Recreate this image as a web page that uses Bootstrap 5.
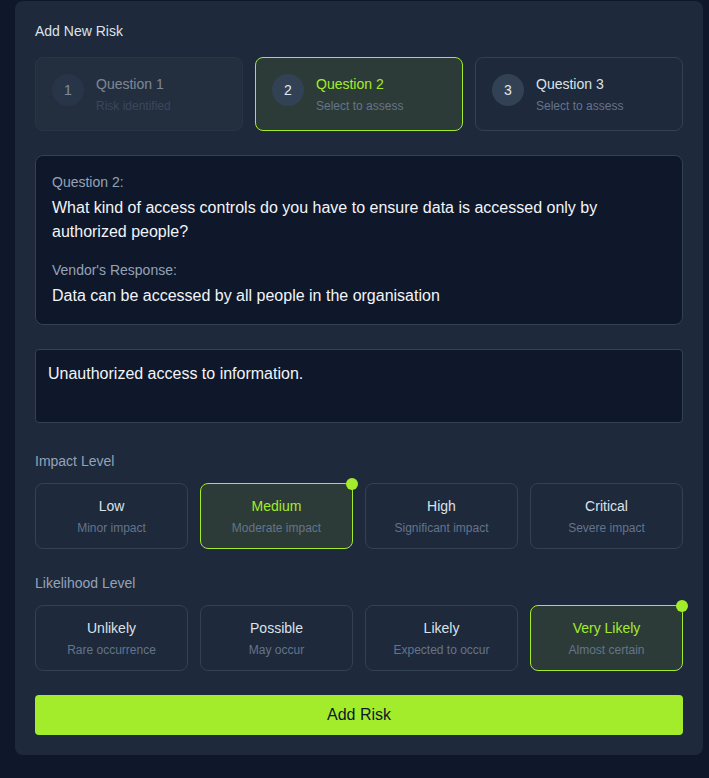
<!DOCTYPE html>
<html lang="en">
<head>
<meta charset="utf-8">
<meta name="viewport" content="width=device-width, initial-scale=1">
<title>Add New Risk</title>
<link href="https://cdn.jsdelivr.net/npm/bootstrap@5.3.0/dist/css/bootstrap.min.css" rel="stylesheet">
<style>
  :root { --lime: #a3ec2b; --panel: #1e293b; --ink: #0f172a; --line: #334155; }
  body { background: var(--ink); color: #f1f5f9; font-family: "Liberation Sans", Arial, sans-serif; font-size: 16px; line-height: 24px; }
  .page { padding: 1px 6px 23px 15px; }
  .risk-panel { background: var(--panel); border-radius: 8px; padding: 20px; }
  .stack { gap: 24px; }
  .text-14 { font-size: 14px; line-height: 20px; }
  .text-12 { font-size: 12px; line-height: 16px; color: #64748b; }
  .soft { color: #94a3b8; }
  .bright { color: #dbe2ea; }
  .tiles { --bs-gutter-x: 12px; --bs-gutter-y: 0; }
  .tile { background: transparent; border: 1px solid var(--line); border-radius: 8px; color: #dbe2ea; }
  .tile.step { padding: 16px; gap: 12px; }
  .tile.level { padding: 12px; cursor: pointer; }
  .tile-text { gap: 4px; }
  .step:disabled { opacity: .5; background: #293344; }
  .step:disabled .text-12 { opacity: .8; }
  .step-number { width: 32px; height: 32px; background: var(--line); color: #e2e8f0; }
  .step.current, .btn-check:checked + .level { background: #2d3b38; border-color: var(--lime); color: var(--lime); }
  .btn-check:checked + .level::after { content: ""; position: absolute; top: -6px; right: -6px; width: 12px; height: 12px; border-radius: 50%; background: var(--lime); }
  .btn-check:focus-visible + .level { outline: 2px solid var(--lime); outline-offset: 2px; }
  .qa { background: var(--ink); border: 1px solid var(--line); border-radius: 8px; padding: 16px; gap: 16px; }
  .risk-input, .risk-input:focus { background: var(--ink); border: 1px solid var(--line); border-radius: 4px; color: #f1f5f9; padding: 12px; line-height: 24px; resize: none; margin-bottom: 4px; }
  .add-risk, .add-risk:hover { background: var(--lime); color: var(--ink); border: 0; border-radius: 4px; padding: 8px 16px; line-height: 24px; }
  legend { margin-bottom: 12px; }
</style>
</head>
<body>
<main class="page">
  <form class="risk-panel">
    <h1 class="text-14 fw-normal bright mb-3">Add New Risk</h1>
    <div class="stack d-flex flex-column">
      <div class="row row-cols-3 tiles">
        <div class="col">
          <button type="button" class="tile step w-100 d-flex align-items-start text-start" disabled>
            <span class="step-number text-14 rounded-circle d-flex align-items-center justify-content-center flex-shrink-0">1</span>
            <span class="tile-text d-flex flex-column"><span class="text-14">Question 1</span><span class="text-12">Risk identified</span></span>
          </button>
        </div>
        <div class="col">
          <button type="button" class="tile step current w-100 d-flex align-items-start text-start" aria-current="step">
            <span class="step-number text-14 rounded-circle d-flex align-items-center justify-content-center flex-shrink-0">2</span>
            <span class="tile-text d-flex flex-column"><span class="text-14">Question 2</span><span class="text-12">Select to assess</span></span>
          </button>
        </div>
        <div class="col">
          <button type="button" class="tile step w-100 d-flex align-items-start text-start">
            <span class="step-number text-14 rounded-circle d-flex align-items-center justify-content-center flex-shrink-0">3</span>
            <span class="tile-text d-flex flex-column"><span class="text-14">Question 3</span><span class="text-12">Select to assess</span></span>
          </button>
        </div>
      </div>

      <section class="qa d-flex flex-column">
        <div>
          <h2 class="text-14 fw-normal soft mb-1">Question 2:</h2>
          <p class="mb-0">What kind of access controls do you have to ensure data is accessed only by authorized people?</p>
        </div>
        <div>
          <h2 class="text-14 fw-normal soft mb-1">Vendor's Response:</h2>
          <p class="mb-0">Data can be accessed by all people in the organisation</p>
        </div>
      </section>

      <textarea class="form-control risk-input" rows="2" aria-label="Risk description">Unauthorized access to information.</textarea>

      <fieldset>
        <legend class="text-14 soft">Impact Level</legend>
        <div class="row row-cols-4 tiles">
          <div class="col">
            <input class="btn-check" type="radio" name="impact" id="impact-low">
            <label class="tile level tile-text position-relative d-flex flex-column text-center" for="impact-low"><span class="text-14">Low</span><span class="text-12">Minor impact</span></label>
          </div>
          <div class="col">
            <input class="btn-check" type="radio" name="impact" id="impact-medium" checked>
            <label class="tile level tile-text position-relative d-flex flex-column text-center" for="impact-medium"><span class="text-14">Medium</span><span class="text-12">Moderate impact</span></label>
          </div>
          <div class="col">
            <input class="btn-check" type="radio" name="impact" id="impact-high">
            <label class="tile level tile-text position-relative d-flex flex-column text-center" for="impact-high"><span class="text-14">High</span><span class="text-12">Significant impact</span></label>
          </div>
          <div class="col">
            <input class="btn-check" type="radio" name="impact" id="impact-critical">
            <label class="tile level tile-text position-relative d-flex flex-column text-center" for="impact-critical"><span class="text-14">Critical</span><span class="text-12">Severe impact</span></label>
          </div>
        </div>
      </fieldset>

      <fieldset>
        <legend class="text-14 soft">Likelihood Level</legend>
        <div class="row row-cols-4 tiles">
          <div class="col">
            <input class="btn-check" type="radio" name="likelihood" id="like-unlikely">
            <label class="tile level tile-text position-relative d-flex flex-column text-center" for="like-unlikely"><span class="text-14">Unlikely</span><span class="text-12">Rare occurrence</span></label>
          </div>
          <div class="col">
            <input class="btn-check" type="radio" name="likelihood" id="like-possible">
            <label class="tile level tile-text position-relative d-flex flex-column text-center" for="like-possible"><span class="text-14">Possible</span><span class="text-12">May occur</span></label>
          </div>
          <div class="col">
            <input class="btn-check" type="radio" name="likelihood" id="like-likely">
            <label class="tile level tile-text position-relative d-flex flex-column text-center" for="like-likely"><span class="text-14">Likely</span><span class="text-12">Expected to occur</span></label>
          </div>
          <div class="col">
            <input class="btn-check" type="radio" name="likelihood" id="like-very" checked>
            <label class="tile level tile-text position-relative d-flex flex-column text-center" for="like-very"><span class="text-14">Very Likely</span><span class="text-12">Almost certain</span></label>
          </div>
        </div>
      </fieldset>

      <button type="button" class="btn add-risk w-100">Add Risk</button>
    </div>
  </form>
</main>
<script src="https://cdn.jsdelivr.net/npm/bootstrap@5.3.0/dist/js/bootstrap.bundle.min.js"></script>
</body>
</html>
